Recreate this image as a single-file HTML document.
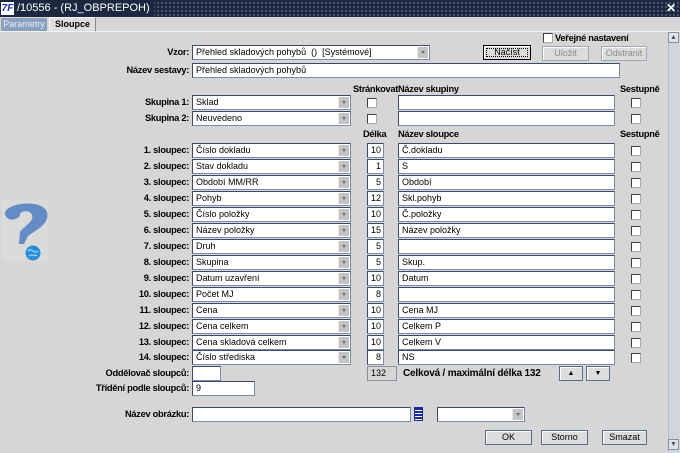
<!DOCTYPE html>
<html><head><meta charset="utf-8">
<style>
*{box-sizing:border-box;margin:0;padding:0}
body{width:680px;height:453px;background:#d6d6d6;font-family:"Liberation Sans",sans-serif;font-size:10px;position:relative;overflow:hidden;color:#000}
.a{position:absolute}
.title{left:0;top:0;width:680px;height:17px;background:#1b2840;background-image:radial-gradient(#56627a 0.8px,transparent 1px);background-size:4px 4px;background-position:0 1px}
.tt{left:0;top:0;height:17px;background:#1b2840;color:#fff;font-size:11px;line-height:17px;padding-left:17px;padding-right:4px}
.logo{left:1px;top:2px;width:13px;height:13px;background:#fff;color:#1b2fb0;font-weight:bold;font-style:italic;font-size:10px;line-height:13px;text-align:center}
.lb{font-weight:bold;text-align:right;width:180px;line-height:15px;font-size:9.3px;letter-spacing:-0.3px}
.in{background:#fff;border:1px solid #7a8aa8;border-top-color:#3c4a66;border-left-color:#3c4a66;height:15px;font-size:9px;line-height:13px;padding-left:3px;white-space:nowrap;overflow:hidden}
.sel{width:159px}
.arr{position:absolute;right:1px;top:1px;width:11px;height:11px;background:#c4c4c4;border-left:1px solid #e8e8e8}
.arr:before{content:"";position:absolute;left:3px;top:4px;border:2.5px solid transparent;border-top:3px solid #6a6a6a}
.num{width:17px;text-align:right;padding-right:2px}
.nm{width:217px}
.cb{width:10px;height:10px;background:#fff;border:1px solid #404040;border-right-color:#aaa;border-bottom-color:#aaa}
.btn{height:15px;border:1px solid #5a6a88;background:#dcdcdc;text-align:center;font-size:9px;line-height:13px;box-shadow:inset 1px 1px #fff}
.dis{color:#8a8a8a;border-color:#a0a8b8}
.hd{font-weight:bold;line-height:12px;font-size:9.3px;white-space:nowrap;letter-spacing:-0.3px}
</style></head><body>
<div class="a title"></div>
<div class="a tt">/10556 - (RJ_OBPREPOH)</div>
<div class="a logo">7F</div>
<div class="a" style="right:4px;top:1px;color:#fff;font-size:12px;font-weight:bold">✕</div>
<div class="a" style="left:0;top:17px;width:680px;height:14px;background:#d6d6d6"></div>
<div class="a" style="left:1px;top:18px;width:46px;height:13px;background:#8aa0bc;color:#e8eef8;font-size:9px;line-height:13px;text-align:center;border-radius:2px 2px 0 0">Parametry</div>
<div class="a" style="left:49px;top:17px;width:47px;height:15px;background:#dedede;border:1px solid #f4f4f4;border-right-color:#888;border-bottom:none;font-size:9px;line-height:13px;text-align:center;font-weight:bold">Sloupce</div>
<div class="a" style="left:0;top:31px;width:680px;height:1px;background:#f4f4f4"></div>
<div class="a" style="left:668px;top:32px;width:11px;height:420px;background:#d0d4dc;border-left:1px solid #b8bcc4"></div>
<div class="a" style="left:668px;top:32px;width:11px;height:11px;background:#e0e4ec;border:1px solid #8890a0;font-size:7px;line-height:9px;text-align:center;color:#555">▲</div>
<div class="a" style="left:668px;top:439px;width:11px;height:11px;background:#e0e4ec;border:1px solid #8890a0;font-size:7px;line-height:9px;text-align:center;color:#555">▼</div>
<div class="a" style="left:2px;top:200px;width:46px;height:62px;background:#dadada"></div>
<svg class="a" style="left:2px;top:200px" width="46" height="62" viewBox="0 0 46 62">
<path d="M3 14 C2 3 40 -2 45 12 C48 24 34 30 26 36 L22 44 L17 44 L18 32 C24 24 32 22 30 15 C28 9 16 11 18 16 C12 22 4 20 3 14Z" fill="#658bc6"/>
<circle cx="31" cy="53" r="7.5" fill="#2a8ed6"/><path d="M26 51 C29 47 33 55 36 51 M27 56 C30 53 33 57 35 55" stroke="#9fd6ff" fill="none" stroke-width="1.2"/>
</svg>
<div class="a cb" style="left:543px;top:33px"></div>
<div class="a hd" style="left:555px;top:32px">Veřejné nastavení</div>
<div class="a lb" style="left:9px;top:45px">Vzor:</div>
<div class="a in" style="left:192px;top:45px;width:238px">Přehled skladových pohybů &nbsp;() &nbsp;[Systémové]<span class="arr"></span></div>
<div class="a btn" style="left:483px;top:45px;width:48px;border:1px solid #000;outline:1px dotted #000;outline-offset:-4px">Načíst</div>
<div class="a btn dis" style="left:542px;top:46px;width:47px">Uložit</div>
<div class="a btn dis" style="left:601px;top:46px;width:46px">Odstranit</div>
<div class="a lb" style="left:9px;top:63px">Název sestavy:</div>
<div class="a in" style="left:192px;top:63px;width:428px">Přehled skladových pohybů</div>
<div class="a hd" style="left:353px;top:83px">Stránkovat</div>
<div class="a hd" style="left:398px;top:83px">Název skupiny</div>
<div class="a hd" style="left:620px;top:83px">Sestupně</div>
<div class="a lb" style="left:9px;top:95px">Skupina 1:</div>
<div class="a in sel" style="left:192px;top:95px">Sklad<span class="arr"></span></div>
<div class="a cb" style="left:367px;top:98px"></div>
<div class="a in" style="left:398px;top:95px;width:217px"></div>
<div class="a cb" style="left:631px;top:98px"></div>
<div class="a lb" style="left:9px;top:111px">Skupina 2:</div>
<div class="a in sel" style="left:192px;top:111px">Neuvedeno<span class="arr"></span></div>
<div class="a cb" style="left:367px;top:114px"></div>
<div class="a in" style="left:398px;top:111px;width:217px"></div>
<div class="a cb" style="left:631px;top:114px"></div>
<div class="a hd" style="left:363px;top:128px">Délka</div>
<div class="a hd" style="left:398px;top:128px">Název sloupce</div>
<div class="a hd" style="left:620px;top:128px">Sestupně</div>
<div class="a lb" style="left:9px;top:143px">1. sloupec:</div><div class="a in sel" style="left:192px;top:143px">Číslo dokladu<span class="arr"></span></div><div class="a in num" style="left:367px;top:143px">10</div><div class="a in nm" style="left:398px;top:143px">Č.dokladu</div><div class="a cb" style="left:631px;top:146px"></div>
<div class="a lb" style="left:9px;top:159px">2. sloupec:</div><div class="a in sel" style="left:192px;top:159px">Stav dokladu<span class="arr"></span></div><div class="a in num" style="left:367px;top:159px">1</div><div class="a in nm" style="left:398px;top:159px">S</div><div class="a cb" style="left:631px;top:162px"></div>
<div class="a lb" style="left:9px;top:175px">3. sloupec:</div><div class="a in sel" style="left:192px;top:175px">Období MM/RR<span class="arr"></span></div><div class="a in num" style="left:367px;top:175px">5</div><div class="a in nm" style="left:398px;top:175px">Období</div><div class="a cb" style="left:631px;top:178px"></div>
<div class="a lb" style="left:9px;top:191px">4. sloupec:</div><div class="a in sel" style="left:192px;top:191px">Pohyb<span class="arr"></span></div><div class="a in num" style="left:367px;top:191px">12</div><div class="a in nm" style="left:398px;top:191px">Skl.pohyb</div><div class="a cb" style="left:631px;top:194px"></div>
<div class="a lb" style="left:9px;top:207px">5. sloupec:</div><div class="a in sel" style="left:192px;top:207px">Číslo položky<span class="arr"></span></div><div class="a in num" style="left:367px;top:207px">10</div><div class="a in nm" style="left:398px;top:207px">Č.položky</div><div class="a cb" style="left:631px;top:210px"></div>
<div class="a lb" style="left:9px;top:223px">6. sloupec:</div><div class="a in sel" style="left:192px;top:223px">Název položky<span class="arr"></span></div><div class="a in num" style="left:367px;top:223px">15</div><div class="a in nm" style="left:398px;top:223px">Název položky</div><div class="a cb" style="left:631px;top:226px"></div>
<div class="a lb" style="left:9px;top:239px">7. sloupec:</div><div class="a in sel" style="left:192px;top:239px">Druh<span class="arr"></span></div><div class="a in num" style="left:367px;top:239px">5</div><div class="a in nm" style="left:398px;top:239px"></div><div class="a cb" style="left:631px;top:242px"></div>
<div class="a lb" style="left:9px;top:255px">8. sloupec:</div><div class="a in sel" style="left:192px;top:255px">Skupina<span class="arr"></span></div><div class="a in num" style="left:367px;top:255px">5</div><div class="a in nm" style="left:398px;top:255px">Skup.</div><div class="a cb" style="left:631px;top:258px"></div>
<div class="a lb" style="left:9px;top:271px">9. sloupec:</div><div class="a in sel" style="left:192px;top:271px">Datum uzavření<span class="arr"></span></div><div class="a in num" style="left:367px;top:271px">10</div><div class="a in nm" style="left:398px;top:271px">Datum</div><div class="a cb" style="left:631px;top:274px"></div>
<div class="a lb" style="left:9px;top:287px">10. sloupec:</div><div class="a in sel" style="left:192px;top:287px">Počet MJ<span class="arr"></span></div><div class="a in num" style="left:367px;top:287px">8</div><div class="a in nm" style="left:398px;top:287px"></div><div class="a cb" style="left:631px;top:290px"></div>
<div class="a lb" style="left:9px;top:303px">11. sloupec:</div><div class="a in sel" style="left:192px;top:303px">Cena<span class="arr"></span></div><div class="a in num" style="left:367px;top:303px">10</div><div class="a in nm" style="left:398px;top:303px">Cena MJ</div><div class="a cb" style="left:631px;top:306px"></div>
<div class="a lb" style="left:9px;top:319px">12. sloupec:</div><div class="a in sel" style="left:192px;top:319px">Cena celkem<span class="arr"></span></div><div class="a in num" style="left:367px;top:319px">10</div><div class="a in nm" style="left:398px;top:319px">Celkem P</div><div class="a cb" style="left:631px;top:322px"></div>
<div class="a lb" style="left:9px;top:335px">13. sloupec:</div><div class="a in sel" style="left:192px;top:335px">Cena skladová celkem<span class="arr"></span></div><div class="a in num" style="left:367px;top:335px">10</div><div class="a in nm" style="left:398px;top:335px">Celkem V</div><div class="a cb" style="left:631px;top:338px"></div>
<div class="a lb" style="left:9px;top:350px">14. sloupec:</div><div class="a in sel" style="left:192px;top:350px">Číslo střediska<span class="arr"></span></div><div class="a in num" style="left:367px;top:350px">8</div><div class="a in nm" style="left:398px;top:350px">NS</div><div class="a cb" style="left:631px;top:353px"></div>
<div class="a lb" style="left:9px;top:366px">Oddělovač sloupců:</div>
<div class="a in" style="left:192px;top:366px;width:29px"></div>
<div class="a in" style="left:367px;top:366px;width:30px;background:#d6d6d6;border-color:#8890a0">132</div>
<div class="a hd" style="left:403px;top:368px;font-size:10px;letter-spacing:-0.2px">Celková / maximální délka 132</div>
<div class="a btn" style="left:559px;top:366px;width:24px;font-size:7px">▲</div>
<div class="a btn" style="left:586px;top:366px;width:24px;font-size:7px">▼</div>
<div class="a lb" style="left:9px;top:381px">Třídění podle sloupců:</div>
<div class="a in" style="left:192px;top:381px;width:63px">9</div>
<div class="a lb" style="left:9px;top:407px">Název obrázku:</div>
<div class="a in" style="left:192px;top:407px;width:219px"></div>
<div class="a" style="left:414px;top:407px;width:9px;height:14px;background:repeating-linear-gradient(#1a2a9a 0 2px,#fff 2px 3px);border:1px solid #1a2a9a"></div>
<div class="a in" style="left:437px;top:407px;width:88px"><span class="arr"></span></div>
<div class="a btn" style="left:485px;top:430px;width:47px">OK</div>
<div class="a btn" style="left:541px;top:430px;width:47px">Storno</div>
<div class="a btn" style="left:602px;top:430px;width:45px">Smazat</div>
</body></html>
